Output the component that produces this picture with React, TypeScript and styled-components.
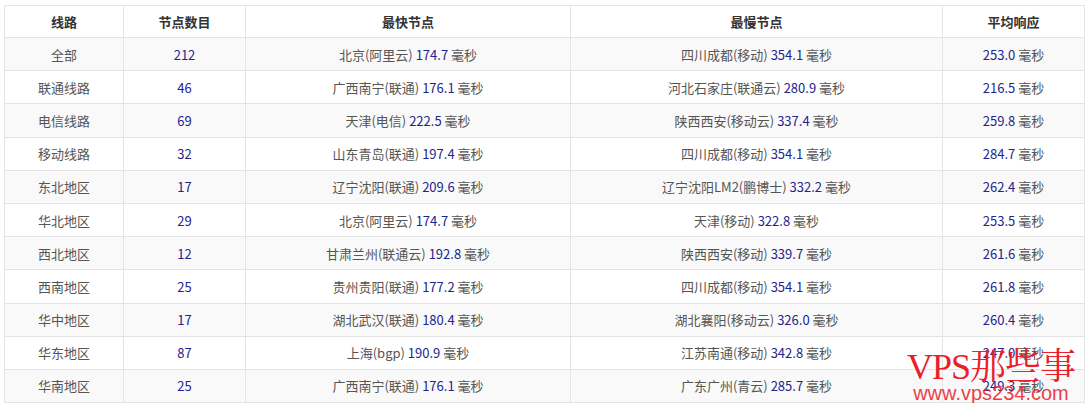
import React from 'react';
import styled, { createGlobalStyle } from 'styled-components';

const Global = createGlobalStyle`
  body { margin: 0; background: #fff; font-family: "Microsoft YaHei", "Noto Sans CJK SC", sans-serif; }
`;

const rows: [string, string, string, string, string, string, string][] = [
  ['全部', '212', '北京(阿里云)', '174.7', '四川成都(移动)', '354.1', '253.0'],
  ['联通线路', '46', '广西南宁(联通)', '176.1', '河北石家庄(联通云)', '280.9', '216.5'],
  ['电信线路', '69', '天津(电信)', '222.5', '陕西西安(移动云)', '337.4', '259.8'],
  ['移动线路', '32', '山东青岛(联通)', '197.4', '四川成都(移动)', '354.1', '284.7'],
  ['东北地区', '17', '辽宁沈阳(联通)', '209.6', '辽宁沈阳LM2(鹏博士)', '332.2', '262.4'],
  ['华北地区', '29', '北京(阿里云)', '174.7', '天津(移动)', '322.8', '253.5'],
  ['西北地区', '12', '甘肃兰州(联通云)', '192.8', '陕西西安(移动)', '339.7', '261.6'],
  ['西南地区', '25', '贵州贵阳(联通)', '177.2', '四川成都(移动)', '354.1', '261.8'],
  ['华中地区', '17', '湖北武汉(联通)', '180.4', '湖北襄阳(移动云)', '326.0', '260.4'],
  ['华东地区', '87', '上海(bgp)', '190.9', '江苏南通(移动)', '342.8', '247.0'],
  ['华南地区', '25', '广西南宁(联通)', '176.1', '广东广州(青云)', '285.7', '249.3'],
];

const Wrap = styled.div`
  position: relative;
  padding: 5px 5px 0 4px;
`;

const Table = styled.table`
  width: 1080px;
  border-collapse: collapse;
  font-size: 13px;
  color: #555;
  table-layout: fixed;
`;

const Th = styled.th`
  height: 31px;
  padding: 0;
  border: 1px solid #e4e4e4;
  font-weight: bold;
  color: #333;
  background: #fff;
`;

const Tr = styled.tr<{ $odd: boolean }>`
  background: ${(p) => (p.$odd ? '#f9f9f9' : '#fff')};
`;

const Td = styled.td`
  height: 32.2px;
  border: 1px solid #e4e4e4;
  text-align: center;
  padding: 0;
`;

const Num = styled.span`
  color: #24248f;
`;

const Mark = styled.div`
  position: absolute;
  right: 14px;
  bottom: 0;
  color: #e8202a;
  text-align: center;
  line-height: 1;
  pointer-events: none;
`;

const MarkBig = styled.div`
  font-family: "Liberation Serif", "Noto Serif CJK SC", "Noto Sans CJK SC", serif;
  font-size: 36px;
  letter-spacing: -1px;
`;

const MarkSmall = styled.div`
  font-family: "Liberation Sans", sans-serif;
  font-size: 20px;
  margin-top: -2px;
  opacity: 0.85;
`;

const Ms = ({ v }: { v: string }) => (
  <>
    <Num>{v}</Num> 毫秒
  </>
);

export default function App() {
  return (
    <Wrap>
      <Global />
      <Table>
        <colgroup>
          <col style={{ width: 119 }} />
          <col style={{ width: 122 }} />
          <col style={{ width: 325 }} />
          <col style={{ width: 372 }} />
          <col style={{ width: 142 }} />
        </colgroup>
        <thead>
          <tr>
            <Th>线路</Th>
            <Th>节点数目</Th>
            <Th>最快节点</Th>
            <Th>最慢节点</Th>
            <Th>平均响应</Th>
          </tr>
        </thead>
        <tbody>
          {rows.map((r, i) => (
            <Tr key={i} $odd={i % 2 === 0}>
              <Td>{r[0]}</Td>
              <Td><Num>{r[1]}</Num></Td>
              <Td>{r[2]} <Ms v={r[3]} /></Td>
              <Td>{r[4]} <Ms v={r[5]} /></Td>
              <Td><Ms v={r[6]} /></Td>
            </Tr>
          ))}
        </tbody>
      </Table>
      <Mark>
        <MarkBig>VPS那些事</MarkBig>
        <MarkSmall>www.vps234.com</MarkSmall>
      </Mark>
    </Wrap>
  );
}
